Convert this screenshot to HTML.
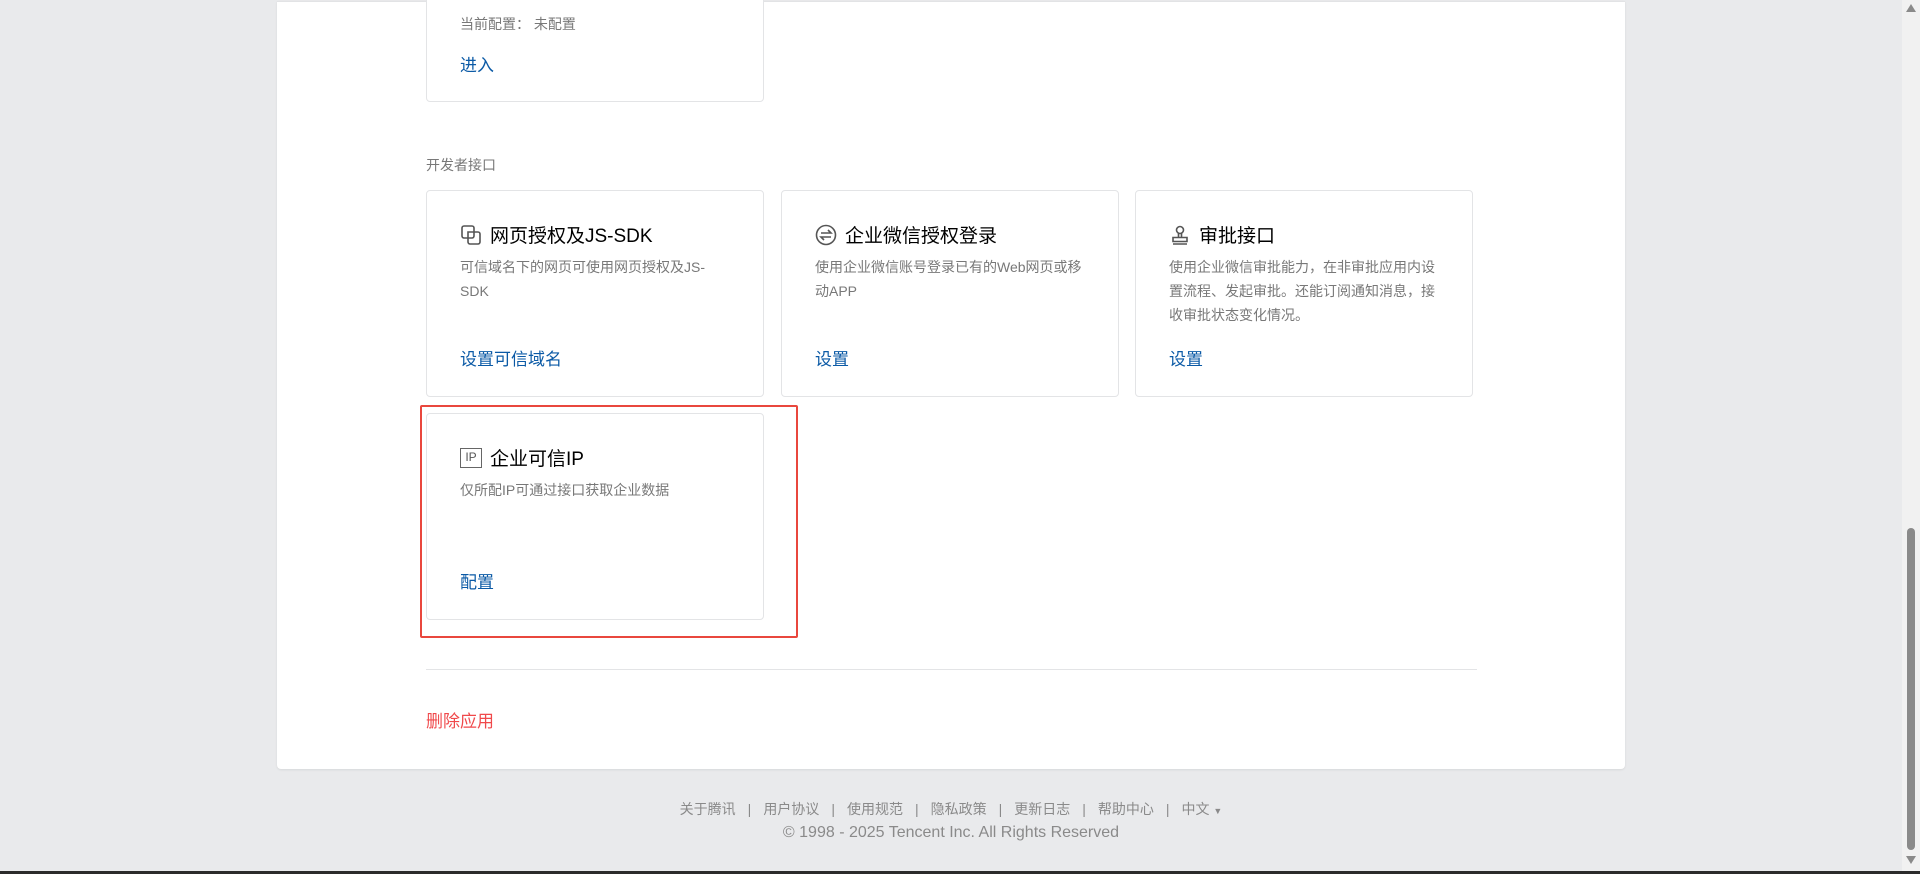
<!DOCTYPE html>
<html><head><meta charset="utf-8"><style>
*{margin:0;padding:0;box-sizing:border-box}
body{width:1920px;height:874px;overflow:hidden;background:#e9eaec;font-family:"Liberation Sans","Noto Sans CJK SC",sans-serif;position:relative}
.panel{position:absolute;left:277px;top:1px;width:1348px;height:768px;background:#fff;border-radius:0 0 4px 4px;border-top:1px solid #e2e3e5;box-shadow:0 1px 2px rgba(0,0,0,.08)}
.card{position:absolute;background:#fff;border:1px solid #e3e4e6;border-radius:4px;width:338px;height:207px}
.card .t{position:absolute;left:33px;top:30px;font-size:19px;color:#000;display:flex;align-items:center;gap:8px}
.card .d{position:absolute;left:33px;top:64px;width:272px;font-size:14px;line-height:24px;color:#787878}
.card .l{position:absolute;left:33px;top:154px;font-size:17px;color:#0b5aa6}
.ab{position:absolute;font-size:14px;color:#787878}
.ft span{margin:0 12px}
</style></head><body>
<div class="panel"></div>
<div class="card" style="left:426px;top:-105px">
 <div class="ab" style="left:33px;top:118px">当前配置：&nbsp;未配置</div>
 <div class="l" style="top:155px">进入</div>
</div>
<div class="ab" style="left:426px;top:155px">开发者接口</div>
<div class="card" style="left:426px;top:190px">
 <div class="t"><svg width="22" height="22" viewBox="0 0 22 22" fill="none" stroke="#555" stroke-width="1.6"><rect x="2" y="2" width="12" height="12" rx="2"/><path d="M8 8h10a2 2 0 0 1 2 2v8a2 2 0 0 1-2 2h-8a2 2 0 0 1-2-2z"/></svg>网页授权及JS-SDK</div>
 <div class="d">可信域名下的网页可使用网页授权及JS-SDK</div>
 <div class="l">设置可信域名</div>
</div>
<div class="card" style="left:781px;top:190px">
 <div class="t"><svg width="22" height="22" viewBox="0 0 22 22" fill="none" stroke="#555" stroke-width="1.6"><circle cx="11" cy="11" r="9.5"/><path d="M6 9h10l-3-3M16 13H6l3 3"/></svg>企业微信授权登录</div>
 <div class="d">使用企业微信账号登录已有的Web网页或移动APP</div>
 <div class="l">设置</div>
</div>
<div class="card" style="left:1135px;top:190px">
 <div class="t"><svg width="22" height="22" viewBox="0 0 22 22" fill="none" stroke="#555" stroke-width="1.6"><circle cx="11" cy="6" r="3.5"/><path d="M9.5 9.5v4M12.5 9.5v4M4 13.5h14v4H4zM4 20h14"/></svg>审批接口</div>
 <div class="d">使用企业微信审批能力，在非审批应用内设置流程、发起审批。还能订阅通知消息，接收审批状态变化情况。</div>
 <div class="l">设置</div>
</div>
<div class="card" style="left:426px;top:413px">
 <div class="t"><span style="display:inline-block;width:22px;height:20px;border:1.5px solid #666;font-size:12px;color:#555;text-align:center;line-height:17px">IP</span>企业可信IP</div>
 <div class="d">仅所配IP可通过接口获取企业数据</div>
 <div class="l">配置</div>
</div>
<div style="position:absolute;left:420px;top:405px;width:378px;height:233px;border:2.5px solid #e9473d;border-radius:2px"></div>
<div style="position:absolute;left:426px;top:669px;width:1051px;height:1px;background:#e3e4e6"></div>
<div style="position:absolute;left:426px;top:707px;font-size:17px;color:#f0494b">删除应用</div>
<div class="ft" style="position:absolute;left:0;width:1902px;top:799px;text-align:center;font-size:14px;color:#8a8a8a">关于腾讯<span>|</span>用户协议<span>|</span>使用规范<span>|</span>隐私政策<span>|</span>更新日志<span>|</span>帮助中心<span>|</span>中文 <i style="font-style:normal;font-size:9px">▼</i></div>
<div style="position:absolute;left:0;width:1902px;top:824px;text-align:center;font-size:16px;color:#8a8a8a">© 1998 - 2025 Tencent Inc. All Rights Reserved</div>
<div style="position:absolute;right:0;top:0;width:18px;height:871px;background:#f1f1f1"></div>
<div style="position:absolute;right:5px;top:528px;width:8px;height:322px;background:#8a8a8a;border-radius:4px"></div>
<div style="position:absolute;right:4px;top:4px;width:0;height:0;border-left:5px solid transparent;border-right:5px solid transparent;border-bottom:8px solid #8a8a8a"></div>
<div style="position:absolute;right:4px;top:856px;width:0;height:0;border-left:5px solid transparent;border-right:5px solid transparent;border-top:8px solid #8a8a8a"></div>
<div style="position:absolute;left:0;top:871px;width:1920px;height:3px;background:#2b2b2b"></div>
</body></html>
